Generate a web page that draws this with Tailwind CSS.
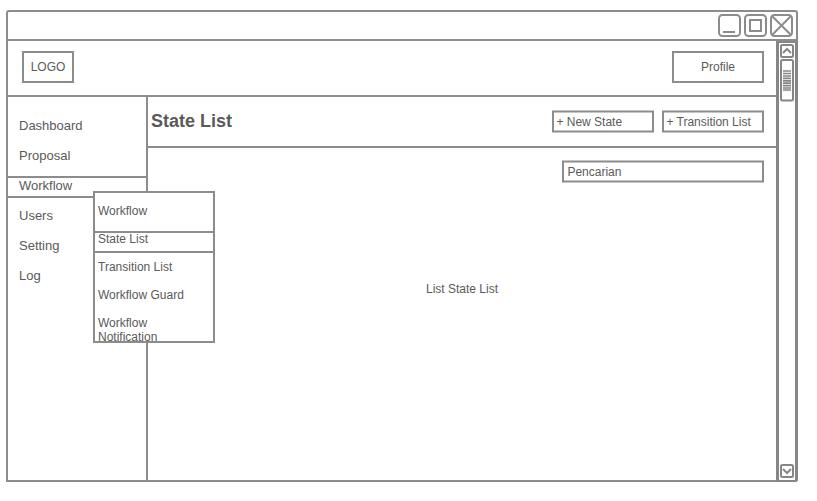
<!DOCTYPE html>
<html lang="id">
<head>
<meta charset="utf-8">
<title>State List</title>
<script src="https://cdn.jsdelivr.net/npm/@tailwindcss/browser@4"></script>
</head>
<body class="bg-white pt-[10px] pl-[6px] w-[817px] h-[501px] overflow-hidden font-['Liberation_Sans',Arial,sans-serif] text-[12px] leading-[14px] text-[#5a5a5a]">
<div class="w-[792px] h-[472px] border-2 border-[#8c8c8c] rounded-[3px] rounded-bl-none flex flex-col">
  <div class="h-[29px] shrink-0 border-b-2 border-[#8c8c8c] flex justify-end gap-[2px] pt-[1px] pr-[2px]">
    <svg class="w-6 h-6" viewBox="0 0 24 24" fill="none" stroke="#8c8c8c" stroke-width="2"><rect x="1" y="2" width="21" height="21" rx="3.5"/><path d="M5 19h12"/></svg>
    <svg class="w-6 h-6" viewBox="0 0 24 24" fill="none" stroke="#8c8c8c" stroke-width="2"><rect x="1" y="2" width="21" height="21" rx="3.5"/><rect x="6" y="7" width="11" height="11"/></svg>
    <svg class="w-6 h-6" viewBox="0 0 24 24" fill="none" stroke="#8c8c8c" stroke-width="2"><rect x="1" y="2" width="21" height="21" rx="3.5"/><path d="M2 3l19 19M21 3L2 22"/></svg>
  </div>
  <div class="flex flex-1 min-h-0">
    <div class="w-[768px] shrink-0 flex flex-col">
      <header class="h-[56px] shrink-0 border-b-2 border-[#8c8c8c] flex justify-between items-start pt-[10px] pl-[14px] pr-[12px]">
        <div class="w-[52px] h-[32px] border-2 border-[#8c8c8c] flex items-center justify-center">LOGO</div>
        <div class="w-[92px] h-[32px] border-2 border-[#8c8c8c] flex items-center justify-center">Profile</div>
      </header>
      <div class="flex flex-1 min-h-0">
        <nav class="relative w-[140px] shrink-0 border-r-2 border-[#8c8c8c] pt-[19px] text-[13px] leading-[20px]">
          <div class="h-[30px] pl-[11px]">Dashboard</div>
          <div class="h-[30px] pl-[11px]">Proposal</div>
          <div class="h-[22px] mb-[8px] border-y-2 border-[#8c8c8c] pl-[11px] leading-[16px]">Workflow</div>
          <div class="h-[30px] pl-[11px]">Users</div>
          <div class="h-[30px] pl-[11px]">Setting</div>
          <div class="h-[30px] pl-[11px]">Log</div>
          <div class="absolute left-[85px] top-[94px] z-10 w-[122px] h-[152px] border-2 border-[#8c8c8c] bg-white text-[12px] leading-[14px] overflow-hidden">
            <div class="h-[38px] pt-[11px] pl-[3px]">Workflow</div>
            <div class="h-[22px] border-y-2 border-[#8c8c8c] pl-[3px] leading-[12px]">State List</div>
            <div class="h-[28px] pt-[7px] pl-[3px]">Transition List</div>
            <div class="h-[28px] pt-[7px] pl-[3px]">Workflow Guard</div>
            <div class="pt-[7px] pl-[3px] w-[90px]">Workflow Notification</div>
          </div>
        </nav>
        <main class="flex-1 flex flex-col">
          <div class="h-[51px] shrink-0 border-b-2 border-[#8c8c8c] flex items-start pl-[3px] pr-[12px]">
            <h1 class="text-[18px] leading-[22px] font-bold pt-[13px]">State List</h1>
            <div class="ml-auto mt-[13px] flex gap-[8px]">
              <div class="grid w-[102px] h-[24px]">
                <svg class="col-start-1 row-start-1" width="102" height="24" fill="none" stroke="#8c8c8c" stroke-width="2"><rect x="1" y="1.5" width="100" height="20"/></svg>
                <span class="col-start-1 row-start-1 pl-[4.4px] pt-[5px]">+ New State</span>
              </div>
              <div class="grid w-[102px] h-[24px]">
                <svg class="col-start-1 row-start-1" width="102" height="24" fill="none" stroke="#8c8c8c" stroke-width="2"><rect x="1" y="1.5" width="100" height="20"/></svg>
                <span class="col-start-1 row-start-1 pl-[4.4px] pt-[5px]">+ Transition List</span>
              </div>
            </div>
          </div>
          <div class="grid self-end w-[202px] h-[24px] mt-[12px] mr-[12px]">
            <svg class="col-start-1 row-start-1" width="202" height="24" fill="none" stroke="#8c8c8c" stroke-width="2"><rect x="1" y="1.5" width="200" height="20"/></svg>
            <span class="col-start-1 row-start-1 pl-[5.4px] pt-[5px]">Pencarian</span>
          </div>
          <div class="mt-[98px] text-center">List State List</div>
        </main>
      </div>
    </div>
    <div class="w-[22px] shrink-0 -mb-[2px] pb-[1px] border-x-[3px] border-y-2 border-[#868686] rounded-br-[3px] flex flex-col items-center">
      <svg width="16" height="59" fill="none" stroke="#868686" stroke-width="2"><rect x="2" y="2" width="12" height="12" rx="1.5"/><path d="M4 10l4-4 4 4"/><rect x="2" y="17" width="12" height="40.5" rx="1.5"/><path stroke-width="1.7" d="M4 28h8M4 30.5h8M4 33h8M4 35.4h8M4 37.8h8M4 40.2h8M4 42.6h8M4 45h8M4 47h8"/></svg>
      <svg class="mt-auto" width="16" height="16" fill="none" stroke="#868686" stroke-width="2"><rect x="2" y="2" width="12" height="12" rx="1.5"/><path d="M4 6l4 4 4-4"/></svg>
    </div>
  </div>
</div>
</body>
</html>
